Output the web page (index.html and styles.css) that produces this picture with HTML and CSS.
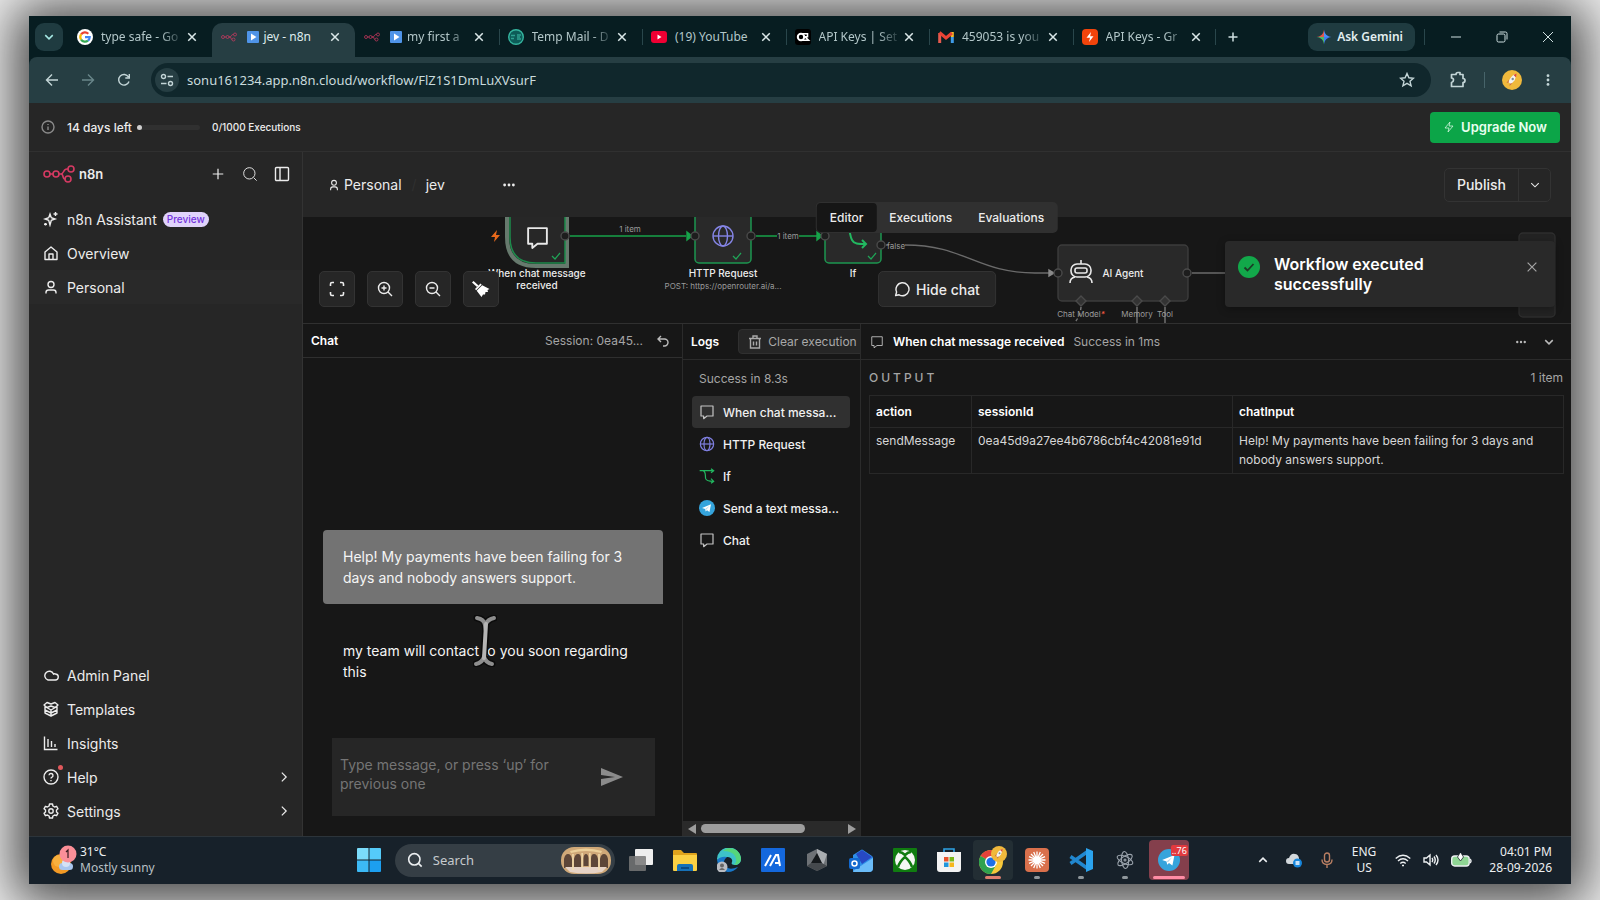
FILE: index.html
```html
<!DOCTYPE html>
<html lang="en">
<head>
<meta charset="utf-8">
<title>jev - n8n</title>
<link rel="stylesheet" href="styles.css">
</head>
<body>
<svg class="defs" aria-hidden="true">
  <defs>
    <symbol id="x" viewBox="0 0 16 16"><path d="M3 3l10 10M13 3L3 13"/></symbol>
    <symbol id="down" viewBox="0 0 16 16"><path d="M3 5.500l5 5 5-5"/></symbol>
    <symbol id="right" viewBox="0 0 16 16"><path d="M5.500 3l5 5-5 5"/></symbol>
    <symbol id="plus" viewBox="0 0 16 16"><path d="M8 2v12M2 8h12"/></symbol>
    <symbol id="dots" viewBox="0 0 16 16"><g fill="currentColor" stroke="none"><circle cx="3" cy="8" r="1.600"/><circle cx="8" cy="8" r="1.600"/><circle cx="13" cy="8" r="1.600"/></g></symbol>
    <symbol id="message" viewBox="0 0 24 24"><path d="M3 3h18v15h-9l-5 4v-4H3z" stroke-linejoin="round"/></symbol>
    <symbol id="globe" viewBox="0 0 24 24"><circle cx="12" cy="12" r="10"/><ellipse cx="12" cy="12" rx="4.500" ry="10"/><path d="M2 12h20"/></symbol>
    <symbol id="branch" viewBox="0 0 24 24"><path d="M1 4h20M6 4c5 2 3 8 4 12 1 3 3 4 11 4M18 1l4 3-4 3M18 16l4 4-4 3"/></symbol>
    <symbol id="search" viewBox="0 0 24 24"><circle cx="11" cy="11" r="8.500"/><path d="M17.500 17.500L22 22"/></symbol>
    <symbol id="bolt" viewBox="0 0 24 24"><path d="M14 2L4 14h8l-2 8 10-12h-8z" stroke-linejoin="round"/></symbol>
    <symbol id="n8n" viewBox="0 0 32 18"><circle cx="4" cy="9" r="3"/><circle cx="13" cy="9" r="3"/><circle cx="28" cy="4" r="3"/><circle cx="25" cy="14" r="3"/><path d="M7 9h3M16 9h2c3 0 2-5 6-5h1M16 9h2c3 0 1 5 4 5"/></symbol>
    <symbol id="play" viewBox="0 0 12 12"><rect width="12" height="12" rx="1" fill="#4f94e8" stroke="none"/><path d="M4 2.500v7l5.500-3.500z" fill="#fff" stroke="none"/></symbol>
    <symbol id="avatar" viewBox="0 0 20 20"><circle cx="10" cy="10" r="10" fill="#f0b93c" stroke="none"/><path d="M14 4c-4 1-6 4-7.500 8l2 2C12 12 14 9 14 4z" fill="#f4f4f4" stroke="none"/><path d="M11.500 5L14.500 3.500 14 7.500z" fill="#dd4a3a" stroke="none"/><path d="M7 9.500l-2.500 3.500 2-.5zM10.500 13l-3 3 .3-2.200z" fill="#c8694a" stroke="none"/><circle cx="10.700" cy="9" r="1.200" fill="#7d8b99" stroke="none"/></symbol>
    <symbol id="plane" viewBox="0 0 24 24"><circle cx="12" cy="12" r="12" fill="#35a4dc" stroke="none"/><path d="M4.500 12l13.500-5.500-2.300 11.500-3.700-2.700-2 2-.7-3.800z" fill="#fff" stroke="none"/><path d="M9.300 13.500L15.500 9l-4.500 5.500" fill="#b9d9ea" stroke="none"/></symbol>
  </defs>
</svg>

<div class="window">
  <header class="tabstrip">
    <button class="tab-search" aria-label="Search tabs"><svg class="i12 bold"><use href="#down"/></svg></button>
    <nav class="tabs">
      <div class="tab">
        <svg class="i16" viewBox="0 0 16 16"><circle cx="8" cy="8" r="8" fill="#fff" stroke="none"/><g stroke-width="2.200"><path d="M4.100 5.400A4.700 4.700 0 0 1 11.300 4.700" stroke="#ea4335"/><path d="M4.100 10.600a4.700 4.700 0 0 1 0-5.200" stroke="#fbbc05"/><path d="M11 11.600a4.700 4.700 0 0 1-6.900-1" stroke="#34a853"/><path d="M8 8.200h4.700a4.700 4.700 0 0 1-1.700 3.400" stroke="#4285f4"/></g></svg>
        <span class="tab-title fade">type safe - Go</span><button class="tab-close" aria-label="Close"><svg class="i12"><use href="#x"/></svg></button>
      </div>
      <div class="tab active">
        <svg class="i16 brand"><use href="#n8n"/></svg>
        <span class="tab-title"><svg class="emoji"><use href="#play"/></svg>jev - n8n</span><button class="tab-close" aria-label="Close"><svg class="i12"><use href="#x"/></svg></button>
      </div>
      <div class="tab">
        <svg class="i16 brand"><use href="#n8n"/></svg>
        <span class="tab-title fade"><svg class="emoji"><use href="#play"/></svg>my first a</span><button class="tab-close" aria-label="Close"><svg class="i12"><use href="#x"/></svg></button>
      </div>
      <div class="tab sep">
        <svg class="i16" viewBox="0 0 16 16"><circle cx="8" cy="8" r="7.300" fill="#0d5c58" stroke="#35b59f"/><path d="M3 6.500h4M3 9.500h3M9 6h4M9 8h3M9 10h4" stroke="#2fa090"/></svg>
        <span class="tab-title fade">Temp Mail - D</span><button class="tab-close" aria-label="Close"><svg class="i12"><use href="#x"/></svg></button>
      </div>
      <div class="tab sep">
        <svg class="i16" viewBox="0 0 16 16"><rect y="2" width="16" height="12" rx="3" fill="#f00033" stroke="none"/><path d="M6.500 5.500v5l4-2.500z" fill="#fff" stroke="none"/></svg>
        <span class="tab-title">(19) YouTube</span><button class="tab-close" aria-label="Close"><svg class="i12"><use href="#x"/></svg></button>
      </div>
      <div class="tab sep">
        <svg class="i16" viewBox="0 0 16 16"><rect width="16" height="16" rx="3" fill="#000" stroke="none"/><circle cx="6" cy="8" r="3.200" stroke="#fff" stroke-width="2"/><path d="M7 4.800h5.500v3H10l3.500 3.500H7" stroke="#fff" stroke-width="1.600"/></svg>
        <span class="tab-title fade">API Keys | Set</span><button class="tab-close" aria-label="Close"><svg class="i12"><use href="#x"/></svg></button>
      </div>
      <div class="tab sep">
        <svg class="i16" viewBox="0 0 16 16"><g stroke-width="3"><path d="M1.700 14V4" stroke="#e55a4e"/><path d="M14.300 14V8" stroke="#3f9be8"/><path d="M14.300 8V3" stroke="#f5bd27"/><path d="M1.500 3.500L8 9l6-5" stroke="#ea4335"/></g></svg>
        <span class="tab-title fade">459053 is you</span><button class="tab-close" aria-label="Close"><svg class="i12"><use href="#x"/></svg></button>
      </div>
      <div class="tab sep">
        <svg class="i16" viewBox="0 0 16 16"><rect width="16" height="16" rx="4" fill="#f2440b" stroke="none"/><path d="M9 3L4.500 8.700H8L7 13l4.500-5.700H8.200z" fill="#fff" stroke="none"/></svg>
        <span class="tab-title fade">API Keys - Gr</span><button class="tab-close" aria-label="Close"><svg class="i12"><use href="#x"/></svg></button>
      </div>
    </nav>
    <button class="new-tab" aria-label="New tab"><svg class="i12 bold"><use href="#plus"/></svg></button>
    <div class="win-controls">
      <button class="gemini"><svg class="i16" viewBox="0 0 16 16"><g stroke="none"><path d="M8 .5C8.500 5 11 7.500 15.500 8H8z" fill="#4b8df8"/><path d="M8 .5C7.500 5 5 7.500.5 8H8z" fill="#e3574b"/><path d="M.5 8C5 8.500 7.500 11 8 15.500V8z" fill="#4cb868"/><path d="M15.500 8C11 8.500 8.500 11 8 15.500V8z" fill="#3f7df0"/></g></svg>Ask Gemini</button>
      <span class="win-sep"></span>
      <button class="win-btn" aria-label="Minimize"><svg class="i12" viewBox="0 0 12 12"><path d="M1 6h10"/></svg></button>
      <button class="win-btn" aria-label="Restore"><svg class="i12" viewBox="0 0 12 12"><rect x="1" y="3" width="8" height="8" rx="1.500"/><path d="M3.500 1H9.500Q11 1 11 2.500V8.500"/></svg></button>
      <button class="win-btn" aria-label="Close window"><svg class="i12" viewBox="0 0 12 12"><path d="M1 1l10 10M11 1L1 11"/></svg></button>
    </div>
  </header>

  <div class="toolbar">
    <button class="nav-btn" aria-label="Back"><svg class="i14" viewBox="0 0 14 14"><path d="M13 7H2M7 1.500L1.500 7 7 12.500"/></svg></button>
    <button class="nav-btn dim" aria-label="Forward"><svg class="i14" viewBox="0 0 14 14"><path d="M1 7h11M7 1.500L12.500 7 7 12.500"/></svg></button>
    <button class="nav-btn" aria-label="Reload"><svg class="i14" viewBox="0 0 14 14"><path d="M12 8.500A5.300 5.300 0 1 1 11.500 4M12.300 1v4h-4"/></svg></button>
    <div class="omnibox">
      <button class="tune" aria-label="Site information"><svg class="i14" viewBox="0 0 14 14"><circle cx="3.500" cy="3.500" r="2"/><path d="M7.500 3.500H13M1 10.500h5.500"/><circle cx="10.500" cy="10.500" r="2"/></svg></button>
      <input class="url" aria-label="Address" value="sonu161234.app.n8n.cloud/workflow/FlZ1S1DmLuXVsurF">
      <button class="star" aria-label="Bookmark"><svg class="i16" viewBox="0 0 16 16"><path d="M8 1.500l1.900 4.300 4.600.4-3.500 3.100 1.100 4.600L8 11.400l-4.100 2.500L5 9.300 1.500 6.200l4.600-.4z"/></svg></button>
    </div>
    <button class="tool-btn" aria-label="Extensions"><svg class="i18" viewBox="0 0 18 18"><path d="M2.500 3.500H7q0-2 2-2t2 0 0 2h3v4q2 0 2 2t-2 2v4H2.500v-4q2-.5 2-2.500t-2-2z" stroke-width="1.700" stroke-linejoin="round"/></svg></button>
    <span class="tool-sep"></span>
    <button class="tool-btn" aria-label="Profile"><svg class="i20"><use href="#avatar"/></svg></button>
    <button class="tool-btn" aria-label="Menu"><svg class="i14 rot"><use href="#dots"/></svg></button>
  </div>

  <div class="banner">
    <svg class="i14 muted" viewBox="0 0 14 14"><circle cx="7" cy="7" r="6"/><path d="M7 6.500v3.500M7 4v1"/></svg>
    <span class="days">14 days left</span>
    <span class="meter"><span class="meter-dot"></span></span>
    <span class="execs">0/1000 Executions</span>
    <button class="upgrade"><svg class="i12"><use href="#bolt"/></svg>Upgrade Now</button>
  </div>

  <div class="app">
    <aside class="sidebar">
      <div class="brand-row">
        <svg class="logo brand"><use href="#n8n"/></svg><b class="brand-name">n8n</b>
        <button class="side-btn" aria-label="Add"><svg class="i14"><use href="#plus"/></svg></button>
        <button class="side-btn" aria-label="Search"><svg class="i16"><use href="#search"/></svg></button>
        <button class="side-btn" aria-label="Toggle sidebar"><svg class="i16" viewBox="0 0 16 16"><rect x="1.500" y="1.500" width="13" height="13" rx="1"/><path d="M6 1.500v13"/></svg></button>
      </div>
      <nav class="menu">
        <a class="menu-item" href="#"><svg class="i16" viewBox="0 0 16 16"><path d="M7 3l1.300 3.700L12 8l-3.700 1.300L7 14l-1.300-4.700L2 8l3.700-1.300zM12.500 1v4M10.500 3h4M2.500 12v2.500M1 13.200h3"/></svg>n8n Assistant<span class="pill">Preview</span></a>
        <a class="menu-item" href="#"><svg class="i16" viewBox="0 0 16 16"><path d="M2 7l6-5 6 5v7.500H2zM6 14.500V9h4v5.500" stroke-linejoin="round"/></svg>Overview</a>
        <a class="menu-item current" href="#"><svg class="i16" viewBox="0 0 16 16"><circle cx="8" cy="5.500" r="3"/><path d="M3 14.500v-1q0-2.500 2.500-2.500h5q2.500 0 2.500 2.500v1"/></svg>Personal</a>
      </nav>
      <nav class="menu bottom">
        <a class="menu-item" href="#"><svg class="i16" viewBox="0 0 16 16"><path d="M5 13h7a3 3 0 0 0 .5-6Q11.500 6.500 10.500 7A4.500 4.500 0 1 0 5 13z"/></svg>Admin Panel</a>
        <a class="menu-item" href="#"><svg class="i16" viewBox="0 0 16 16"><path d="M2 5.500L8 9l6-3.500M8 9v6M2 5.500V12l6 3 6-3V5.500M1 4l3-2.500L8 3l4-1.500L15 4l-3 2.500L8 5 4 6.500zM2 9l6 3 6-3" stroke-linejoin="round"/></svg>Templates</a>
        <a class="menu-item" href="#"><svg class="i16" viewBox="0 0 16 16"><path d="M1.500 1.500v13h13M5 4v8M8.500 6v6M12 9v3"/></svg>Insights</a>
        <a class="menu-item" href="#"><span class="icon-wrap"><svg class="i16" viewBox="0 0 16 16"><circle cx="8" cy="8" r="7"/><path d="M6 6.300a2 2 0 1 1 2.700 2Q8 8.600 8 9.500M8 11v1.200"/></svg><span class="alert-dot"></span></span>Help<svg class="i14 chev"><use href="#right"/></svg></a>
        <a class="menu-item" href="#"><svg class="i16" viewBox="0 0 16 16"><path d="M6.500 1h3l.4 2 1.700 1 2-.7 1.400 2.500L13.500 7v2l1.500 1.200-1.400 2.500-2-.7-1.700 1-.4 2h-3l-.4-2-1.700-1-2 .7L1 10.200 2.500 9V7L1 5.800l1.400-2.500 2 .7 1.700-1z" stroke-linejoin="round"/><circle cx="8" cy="8" r="2.200"/></svg>Settings<svg class="i14 chev"><use href="#right"/></svg></a>
      </nav>
    </aside>

    <main class="work">
      <div class="head">
        <svg class="i12" viewBox="0 0 16 16"><circle cx="8" cy="5" r="3.200"/><path d="M3.500 15v-1.500q0-3 3-3h3q3 0 3 3V15"/></svg>
        <a class="crumb" href="#">Personal</a><span class="slash">/</span><span class="flow-name">jev</span>
        <button class="more" aria-label="More"><svg class="i14"><use href="#dots"/></svg></button>
        <div class="publish"><button class="publish-main">Publish</button><button class="publish-more" aria-label="Publish options"><svg class="i12"><use href="#down"/></svg></button></div>
        <div class="views"><button class="view on">Editor</button><button class="view">Executions</button><button class="view">Evaluations</button></div>
      </div>

      <section class="canvas">
        <svg class="graph" viewBox="0 0 1268 107" width="1268" height="107">
          <path d="M204-10V20q0 29 29 29h31V-10z" fill="#272727" stroke="#66796d" stroke-width="4"/>
          <path d="M207-10V20q0 26 26 26h29V-10z" fill="#272727" stroke="#1d8a4b" stroke-width="1.500"/>
          <path d="M194 13l-6 7h4l-1 5 6-7h-4z" fill="#e8691b" stroke="none"/>
          <rect x="392" y="-12" width="56" height="58" rx="4" fill="#292929" stroke="#1d9650" stroke-width="1.500"/>
          <rect x="522" y="-12" width="56" height="58" rx="4" fill="#292929" stroke="#1d9650" stroke-width="1.500"/>
          <rect x="755" y="28" width="130" height="56" rx="4" fill="#292929" stroke="#3c3c3c"/>
          <rect x="1216" y="16" width="36" height="84" rx="4" fill="#232323" stroke="#2e2e2e"/>
          <path d="M267 19h116M453 19h21M496 19h18" stroke="#17a34a" stroke-width="1.500"/>
          <path d="M384 15l5 4-5 4zM514 15l5 4-5 4z" fill="#17a34a" stroke="#17a34a"/>
          <path d="M583 28h3M602 28c60 0 72 28 130 28h16M889 56h33" stroke="#6b6b6b"/>
          <path d="M746 53l5 3-5 3z" fill="#8a8a8a" stroke="#8a8a8a"/>
          <path d="M834 90v17M862 90v17" stroke="#777"/><path d="M778 90q-1 11-8 17" stroke="#777" stroke-dasharray="3 3"/>
          <g fill="#1d1d1d" stroke="#4a4a4a"><circle cx="262" cy="19" r="4"/><circle cx="392" cy="19" r="4"/><circle cx="448" cy="19" r="4"/><circle cx="522" cy="19" r="4"/><circle cx="578" cy="28" r="4"/><circle cx="755" cy="56" r="4"/><circle cx="884" cy="56" r="4"/></g>
          <g fill="#333" stroke="#4a4a4a"><path d="M778 79l5 5-5 5-5-5zM834 79l5 5-5 5-5-5zM862 79l5 5-5 5-5-5z"/></g>
          <path d="M249 39l3 3 5-6M430 39l3 3 5-6M565 39l3 3 5-6" stroke="#1fa557" stroke-width="1.200"/>
          <use href="#message" x="222" y="8" width="25" height="25" stroke="#e8e8e8" stroke-width="1.800"/>
          <use href="#globe" x="408" y="7" width="24" height="24" stroke="#8585e6"/>
          <path d="M540 8c8 0 6 10 9 15 2 4 6 4 14 4M559 23l4 4-4 4" stroke="#22b860" stroke-width="2"/>
          <g stroke="#e8e8e8" stroke-width="1.600"><rect x="768" y="47" width="20" height="13" rx="6"/><rect x="772" y="51" width="12" height="5" rx="2"/><path d="M778 47v-4M767 66q0-5 5-6M789 66q0-5-5-6"/></g>
        </svg>
        <span class="edge-label e1">1 item</span>
        <span class="edge-label e2">1 item</span>
        <span class="edge-label e3">false</span>
        <span class="node-label n1">When chat message received</span>
        <span class="node-label n2">HTTP Request<small>POST: https://openrouter.ai/a...</small></span>
        <span class="node-label n3">If</span>
        <span class="node-label n4">AI Agent</span>
        <span class="edge-label p1">Chat Model<i>*</i></span>
        <span class="edge-label p2">Memory</span>
        <span class="edge-label p3">Tool</span>
        <div class="controls">
          <button class="ctl" aria-label="Fit view"><svg class="i16" viewBox="0 0 16 16"><path d="M1.500 5V3q0-1.500 1.500-1.500h2M11 1.500h2q1.500 0 1.500 1.500v2M14.500 11v2q0 1.500-1.500 1.500h-2M5 14.500H3q-1.500 0-1.500-1.500v-2" stroke-width="1.600"/></svg></button>
          <button class="ctl" aria-label="Zoom in"><svg class="i16" viewBox="0 0 16 16"><circle cx="7" cy="7" r="5.500"/><path d="M11 11l4 4M7 4.500v5M4.500 7h5"/></svg></button>
          <button class="ctl" aria-label="Zoom out"><svg class="i16" viewBox="0 0 16 16"><circle cx="7" cy="7" r="5.500"/><path d="M11 11l4 4M4.500 7h5"/></svg></button>
          <button class="ctl" aria-label="Tidy up"><svg class="i18" viewBox="0 0 18 18"><g fill="#fff" stroke="none"><path d="M1.500 1L0 2.500l5 4.500L6.500 5.500z"/><path d="M8.500 3.500L3 9l1.200 1.200 5.500-5.500z"/><path d="M10.200 5.200L17.500 9l-2 1 .5 2-2.500 0-.5 2.500-2 0-1.500 2.500L4.700 10.700z"/></g></svg></button>
        </div>
        <button class="hide-chat"><svg class="i16" viewBox="0 0 16 16"><path d="M1.500 14.500l1-3.500A6.500 6.500 0 1 1 5 13.800z" stroke-linejoin="round"/></svg>Hide chat</button>
        <div class="toast" role="alert">
          <svg class="i22" viewBox="0 0 22 22"><circle cx="11" cy="11" r="11" fill="#12a84a" stroke="none"/><path d="M6.500 11.500l3 3 6-6.500" stroke="#1c3b26" stroke-width="1.800"/></svg>
          <strong class="toast-title">Workflow executed successfully</strong>
          <button class="toast-close" aria-label="Dismiss"><svg class="i14"><use href="#x"/></svg></button>
        </div>
      </section>

      <section class="panels">
        <div class="chat">
          <div class="chat-head"><h2 class="ttl">Chat</h2><span class="session">Session: 0ea45...</span><button class="plain" aria-label="Reset session"><svg class="i12" viewBox="0 0 12 12"><path d="M4 1L1 4l3 3M1 4h6.500a3.500 3.500 0 0 1 0 7H6"/></svg></button></div>
          <div class="chat-body">
            <p class="msg user">Help! My payments have been failing for 3 days and nobody answers support.</p>
            <p class="msg bot">my team will contact to you soon regarding this
              <svg class="ibeam" viewBox="0 0 24 52" width="24" height="52"><g stroke-linecap="round"><path d="M4 3q7 1 8 7 3-6 9-7M13 10L11 42M3 49q6-1 8-7 2 6 8 7" stroke="#0b0b0b" stroke-width="7"/><path d="M4 3q7 1 8 7 3-6 9-7M3 49q6-1 8-7 2 6 8 7" stroke="#8e8e8e" stroke-width="4"/><path d="M13 9L11 43" stroke="#b4b4b4" stroke-width="4"/></g></svg>
            </p>
            <div class="compose">
              <textarea class="compose-text" aria-label="Message" placeholder="Type message, or press ‘up’ for previous one"></textarea>
              <button class="send" aria-label="Send"><svg viewBox="0 0 22 18" width="22" height="18"><path d="M0 0l22 9L0 18v-7l14-2L0 7z" fill="#8b8b8b" stroke="none"/></svg></button>
            </div>
          </div>
        </div>

        <div class="logs">
          <div class="panel-head"><h2 class="ttl">Logs</h2><button class="clear"><svg class="i14" viewBox="0 0 14 14"><path d="M1 3.500h12M5 3.500V1h4v2.500M2.500 3.500v9.500h9V3.500M5.500 6.500v4M8.500 6.500v4"/></svg>Clear execution</button></div>
          <p class="status">Success in 8.3s</p>
          <ul class="log-list">
            <li class="log sel"><svg class="i16"><use href="#message"/></svg>When chat messa...</li>
            <li class="log"><svg class="i16 violet"><use href="#globe"/></svg>HTTP Request</li>
            <li class="log"><svg class="i16 green"><use href="#branch"/></svg>If</li>
            <li class="log"><svg class="i16"><use href="#plane"/></svg>Send a text messa...</li>
            <li class="log"><svg class="i16"><use href="#message"/></svg>Chat</li>
          </ul>
          <div class="hscroll"><span class="arrow left"></span><span class="thumb"></span><span class="arrow right"></span></div>
        </div>

        <div class="output">
          <div class="panel-head out-head"><svg class="i14 light"><use href="#message"/></svg><h2 class="ttl">When chat message received</h2><span class="took">Success in 1ms</span><button class="plain push" aria-label="More"><svg class="i12"><use href="#dots"/></svg></button><button class="plain" aria-label="Collapse"><svg class="i12 bold"><use href="#down"/></svg></button></div>
          <div class="out-bar"><span class="caps">OUTPUT</span><span class="count">1 item</span></div>
          <table class="data">
            <colgroup><col class="c1"><col class="c2"><col></colgroup>
            <thead><tr><th>action</th><th>sessionId</th><th>chatInput</th></tr></thead>
            <tbody><tr><td>sendMessage</td><td>0ea45d9a27ee4b6786cbf4c42081e91d</td><td>Help! My payments have been failing for 3 days and nobody answers support.</td></tr></tbody>
          </table>
        </div>
      </section>
    </main>
  </div>

  <footer class="taskbar">
    <div class="weather">
      <svg viewBox="0 0 28 30" width="28" height="30"><g stroke="none"><circle cx="12" cy="19" r="10" fill="#f39a25"/><circle cx="10" cy="16" r="6" fill="#f8b03e"/><rect x="10" y="18" width="14" height="7" rx="3.500" fill="#a9c6ee"/><circle cx="17" cy="18" r="4" fill="#d5e2f5"/><circle cx="19" cy="9" r="8.500" fill="#fb8f98"/></g><path d="M17 7l2-2v8" stroke="#3a1c20" stroke-width="1.200"/></svg>
      <div><div>31°C</div><div class="soft">Mostly sunny</div></div>
    </div>
    <div class="dock">
      <button class="app-btn start" aria-label="Start"><svg class="i24" viewBox="0 0 24 24"><g fill="#3cb9f5" stroke="none"><path d="M0 1q0-1 1-1h10.500v11.500H0z" fill="#7bdcfb"/><path d="M12.500 0H23q1 0 1 1v10.500H12.500z" fill="#55cbf9"/><path d="M0 12.500h11.500V24H1q-1 0-1-1z"/><path d="M12.500 12.500H24V23q0 1-1 1H12.500z" fill="#1c9ff0"/></g></svg></button>
      <label class="find"><svg class="i16 thick"><use href="#search"/></svg><input class="find-input" placeholder="Search" aria-label="Search">
        <svg viewBox="0 0 50 27" width="50" height="27"><g stroke="none"><rect width="50" height="27" rx="13" fill="#cfa878"/><path d="M3 21v-9q1-5 4-5t4 5v9zM13 21v-9q1-5 4-5t3 5v9zM22.500 19v-8q.5-4 2.500-4t2.500 4v8zM30 21v-9q0-5 3-5t4 5v9zM39 21v-9q1-5 4-5t4 5v9z" fill="#5d4638"/><path d="M4 20h42l-5 5q-16 3-32 0z" fill="#e6d3c6"/><path d="M11.300 7h1.400v16h-1.400zM20.500 6h1.300v15h-1.300zM28.200 6h1.300v15h-1.300zM37.300 7h1.400v16h-1.400z" fill="#f3dfb0"/><path d="M9 4q16-5 32 0l-1 2q-15-4-30 0z" fill="#ecd09a"/></g></svg>
      </label>
      <button class="app-btn" aria-label="Task view"><svg class="i24" viewBox="0 0 24 24"><g stroke="none"><rect x="6" y="1" width="18" height="16" rx="1" fill="#eee"/><rect x="0" y="8" width="17" height="15" rx="1" fill="#777" opacity=".85"/></g></svg></button>
      <button class="app-btn" aria-label="File Explorer"><svg class="i24" viewBox="0 0 24 24"><g stroke="none"><path d="M0 3q0-1 1-1h7l3 3h12q1 0 1 1v6H0z" fill="#e0a31c"/><path d="M0 7h24v15q0 1-1 1H1q-1 0-1-1z" fill="#fbd043"/><path d="M4 23v-5q0-2 2-2h12q2 0 2 2v5z" fill="#1671b8"/><path d="M8 19h8v2H8z" fill="#0c4b85"/></g></svg></button>
      <button class="app-btn" aria-label="Edge"><svg class="i24" viewBox="0 0 24 24"><g stroke="none"><path d="M0 12A12 12 0 0 1 24 11c0 4-3 6-6 6-3 0-4-1-3-3 1-3-2-5-5-5-5 0-8 2-10 3z" fill="#3ec3c9"/><path d="M12 0q10 0 12 10 0 7-7 7 4-4 1-9T6 3q3-3 6-3z" fill="#55d67b"/><path d="M0 12q4-4 10-3-5 4-2 9 4 5 13 1-4 5-10 5Q1 23 0 12z" fill="#1877c9"/><circle cx="5" cy="19" r="5.500" fill="#b9bcc2"/><circle cx="5" cy="17.500" r="2" fill="#666"/><path d="M2 22q3-4 6 0z" fill="#666"/></g></svg></button>
      <button class="app-btn" aria-label="MyASUS"><svg class="i24" viewBox="0 0 24 24"><rect width="24" height="24" rx="1" fill="#1468dd" stroke="none"/><path d="M4 18l6-11M9 18l6-11h2l2 11M14 15h4" stroke="#fff" stroke-width="2"/></svg></button>
      <button class="app-btn" aria-label="Armoury"><svg class="i24" viewBox="0 0 24 24"><g stroke="none"><path d="M12 1l10 5v12l-10 5L2 18V6z" fill="#6e7276"/><path d="M12 1l10 5-4 12-6-13z" fill="#a9adb1"/><path d="M12 5l5 10H6z" fill="#15191c"/><path d="M2 18l4-3h11l5 3-10 5z" fill="#45494d"/></g></svg></button>
      <button class="app-btn" aria-label="Outlook"><svg class="i24" viewBox="0 0 24 24"><g stroke="none"><path d="M4 7l8-5q1-1 2 0l9 6q1 1 1 2v10q0 4-4 4H4z" fill="#2e8fe8"/><path d="M7 6l6-4 10 7-10 7z" fill="#2749c4"/><path d="M4 23l20-13v10q0 4-4 4H5z" fill="#6bbcf8"/><rect x="0" y="10" width="11" height="11" rx="2" fill="#1269cf"/></g><circle cx="5.500" cy="15.500" r="2.500" stroke="#fff" stroke-width="1.500"/></svg></button>
      <button class="app-btn" aria-label="Xbox"><svg class="i24" viewBox="0 0 24 24"><rect width="24" height="24" rx="1" fill="#107c10" stroke="none"/><circle cx="12" cy="12" r="10" fill="#f4f7f4" stroke="none"/><path d="M5 19q2-6 7-10 5 4 7 10M6 4q3 0 6 3 3-3 6-3" stroke="#107c10" stroke-width="2.500"/></svg></button>
      <button class="app-btn" aria-label="Store"><svg class="i24" viewBox="0 0 24 24"><path d="M7 6V1h10v5" stroke="#2ea2e5" stroke-width="1.600"/><g stroke="none"><path d="M0 4h24v17q0 3-3 3H3q-3 0-3-3z" fill="#f3f3f3"/><path d="M7 9h4.500v4.500H7z" fill="#e8532b"/><path d="M12.500 9H17v4.500h-4.500z" fill="#7ab81c"/><path d="M7 14.500h4.500V19H7z" fill="#2096dc"/><path d="M12.500 14.500H17V19h-4.500z" fill="#f6b71d"/></g></svg></button>
      <button class="app-btn open" aria-label="Chrome"><svg class="i28" viewBox="0 0 28 28"><g stroke="none"><circle cx="12" cy="16" r="12" fill="#f7c93a"/><path d="M12 16L1.600 10A12 12 0 0 1 22.400 10z" fill="#e5423a"/><path d="M12 16L1.600 10A12 12 0 0 0 12 28l5-9z" fill="#2fa24f"/><circle cx="12" cy="16" r="6" fill="#fff"/><circle cx="12" cy="16" r="4.600" fill="#1d6fe8"/></g><use href="#avatar" x="12" y="0" width="16" height="16"/></svg><span class="mark wide"></span></button>
      <button class="app-btn" aria-label="Claude"><svg class="i24" viewBox="0 0 24 24"><rect width="24" height="24" rx="4" fill="#d9704c" stroke="none"/><path d="M12 3.500v17M3.500 12h17M6 6l12 12M18 6L6 18M8.700 4l6.600 16M15.300 4L8.700 20M4 8.700l16 6.600M4 15.300l16-6.600" stroke="#fff" stroke-width="1.300"/></svg><span class="mark"></span></button>
      <button class="app-btn" aria-label="VS Code"><svg class="i24" viewBox="0 0 24 24"><path d="M1.500 8.500L18 20M1.500 15.500L18 4" stroke="#2187cf" stroke-width="3.500"/><path d="M17 0l7 3v18l-7 3z" fill="#2ba3ee" stroke="none"/></svg><span class="mark"></span></button>
      <button class="app-btn" aria-label="Electron"><svg class="i20" viewBox="0 0 20 20"><g stroke="#9aa3ac" stroke-width="1.100"><ellipse cx="10" cy="10" rx="8.500" ry="3.500" transform="rotate(25 10 10)"/><ellipse cx="10" cy="10" rx="8.500" ry="3.500" transform="rotate(85 10 10)"/><ellipse cx="10" cy="10" rx="8.500" ry="3.500" transform="rotate(145 10 10)"/><circle cx="10" cy="10" r="1"/></g></svg><span class="mark"></span></button>
      <button class="app-btn tg" aria-label="Telegram"><svg class="i22"><use href="#plane"/></svg><span class="badge">..76</span><span class="mark pink"></span></button>
    </div>
    <div class="tray">
      <svg class="i12 flip bold"><use href="#down"/></svg>
      <svg class="i16" viewBox="0 0 16 16"><g stroke="none"><path d="M3 12a3 3 0 0 1 0-6Q5 1 9 2q3 0 4 4v6z" fill="#d3d8dc"/><circle cx="11.500" cy="11" r="4.500" fill="#1686dc"/></g><path d="M9.500 10h4M9.500 12h4" stroke="#fff"/></svg>
      <svg class="i16 copper" viewBox="0 0 16 16"><rect x="5.500" y="1" width="5" height="9" rx="2.500"/><path d="M3 7.500q0 5 5 5t5-5M8 12.500V16"/></svg>
      <div class="lang"><div>ENG</div><div>US</div></div>
      <div class="sys">
        <svg class="i16" viewBox="0 0 16 16"><path d="M.7 6.500q7.300-6.500 14.600 0M3 9q5-4.500 10 0M5.300 11.500q2.700-2.500 5.400 0M7 13.500h2"/></svg>
        <svg class="i16" viewBox="0 0 16 16"><path d="M1 6h2.500L7 3v10L3.500 10H1zM9 6q1.500 2 0 4M11 4.500q2.500 3.500 0 7M13 3q4 5 0 10"/></svg>
        <svg viewBox="0 0 21 14" width="21" height="14"><rect x=".7" y="3" width="17.500" height="10" rx="3" fill="#8fd694"/><path d="M19 6q2 2 0 4"/><path d="M9.500-1L6.500 4l3 4 3-4z" fill="#fff" stroke="#1a232a" stroke-width=".8"/></svg>
      </div>
      <div class="clock"><div>04:01 PM</div><div>28-09-2026</div></div>
    </div>
  </footer>
</div>
</body>
</html>
```

FILE: styles.css
```css
* { box-sizing: border-box; }
body {
  margin: 0;
  min-height: 100vh;
  display: flex;
  padding: 16px 29px;
  background: #f0f0f0;
  font-family: Inter, "Liberation Sans", sans-serif;
  font-size: 14px;
  color: #ececec;
}
svg { fill: none; stroke: currentColor; stroke-width: 1.4; flex: none; display: block; }
button { font: inherit; color: inherit; background: none; border: 0; padding: 0; display: flex; align-items: center; justify-content: center; }
input, textarea { font: inherit; color: inherit; background: none; border: 0; padding: 0; outline: 0; min-width: 0; }
a { color: inherit; text-decoration: none; }
h2, p, ul { margin: 0; padding: 0; list-style: none; }
.defs { position: absolute; width: 0; height: 0; }
.i12 { width: 12px; height: 12px; }
.i14 { width: 14px; height: 14px; }
.i16 { width: 16px; height: 16px; }
.i18 { width: 18px; height: 18px; }
.i20 { width: 20px; height: 20px; }
.i22 { width: 22px; height: 22px; }
.i24 { width: 24px; height: 24px; }
.i28 { width: 28px; height: 28px; }
.bold { stroke-width: 2; }
.thick { stroke-width: 2.4; }
.rot { transform: rotate(90deg); }
.flip { transform: rotate(180deg); }
.muted { color: #8a8a8a; }
.light { color: #cfcfcf; }
.brand { color: #d63a63; }
.violet { color: #7f7fe0; }
.green { color: #22b860; }

.window {
  flex: 1;
  min-width: 0;
  display: flex;
  flex-direction: column;
  background: #171717;
  box-shadow: 0 4px 50px 14px rgba(0, 0, 0, .72);
}

/* Browser chrome */
.tabstrip, .toolbar, .taskbar { font-family: "Noto Sans", "Open Sans", sans-serif; }
.tabstrip { position: relative; z-index: 1; display: flex; align-items: center; height: 41px; padding-left: 6px; background: #071d21; font-size: 12px; color: #b3c7c9; }
.tab-search { width: 28px; height: 28px; border-radius: 9px; background: #1f3b40; color: #a6e9e4; margin-right: 5px; }
.tabs { flex: 0 1 1148px; display: grid; grid-template-columns: repeat(8, minmax(0, 1fr)); align-self: stretch; min-width: 0; }
.tab { display: flex; align-items: center; padding: 0 14px 0 9px; min-width: 0; position: relative; }
.tab.sep::before, .tab:last-child::after { content: ""; position: absolute; left: 0; top: 13px; width: 1px; height: 16px; background: #29464b; }
.tab:last-child::after { left: auto; right: 0; }
.tab.active { background: #263e43; border-radius: 10px 10px 0 0; margin-top: 7px; padding-bottom: 7px; color: #dfeced; }
.tab-title { flex: 1; min-width: 0; margin-left: 8px; white-space: nowrap; display: flex; align-items: center; gap: 5px; }
.fade { mask-image: linear-gradient(90deg, #000 70%, transparent 98%); }
.emoji { width: 12px; height: 12px; margin-left: 2px; }
.tab-close { width: 12px; height: 16px; color: #dbe8e9; }
.tab-close svg { stroke-width: 2; }
.new-tab { width: 34px; height: 28px; color: #cfe0e1; }
.win-controls { margin-left: auto; display: flex; align-items: center; color: #cfe0e1; }
.gemini { gap: 5px; height: 28px; padding: 0 12px 0 8px; border-radius: 9px; background: #1f3b40; font-weight: 600; color: #e3eff0; font-size: 12px; white-space: nowrap; }
.win-sep { width: 1px; height: 16px; margin: 0 8px 0 9px; background: #29464b; }
.win-btn { width: 46px; height: 28px; }
.win-btn svg { stroke-width: 1; }
.toolbar { display: flex; align-items: center; height: 46px; padding: 0 10px 0 5px; background: #263e43; border-radius: 8px 8px 0 0; color: #c3d5d7; box-shadow: 0 -8px 0 0 #071d21; }
.nav-btn { width: 36px; height: 34px; }
.dim { color: #69868a; }
.omnibox { flex: 1; display: flex; align-items: center; height: 34px; border-radius: 17px; background: #10272c; padding: 0 16px 0 4px; margin: 0 14px 0 9px; }
.tune { width: 24px; height: 24px; border-radius: 12px; background: #263e43; margin-right: 8px; }
.url { flex: 1; font-size: 13px; color: #c9dbdd; }
.tool-btn { width: 26px; height: 30px; }
.tool-sep { width: 1px; height: 16px; background: #47646a; margin: 0 14px 0 13px; }
.tool-btn:last-child { margin-left: 10px; }

/* Trial banner */
.banner { display: flex; align-items: center; height: 49px; padding: 0 11px 0 12px; background: #262626; border-bottom: 1px solid #303030; font-size: 12px; font-weight: 500; }
.days { margin: 0 5px 0 12px; }
.meter { width: 63px; height: 5px; border-radius: 3px; background: #303030; margin-right: 12px; }
.meter-dot { display: block; width: 5px; height: 5px; border-radius: 3px; background: #cfcfcf; }
.execs { font-size: 10px; }
.upgrade { margin-left: auto; gap: 6px; height: 31px; padding: 0 13px; border-radius: 4px; background: #0ca548; color: #e9fff0; font-weight: 600; font-size: 13px; }

/* App */
.app { flex: 1; display: grid; grid-template-columns: 274px minmax(0, 1fr); min-height: 0; }
.sidebar { display: flex; flex-direction: column; background: #262626; border-right: 1px solid #333; padding-bottom: 8px; }
.brand-row { display: flex; align-items: center; height: 44px; padding: 0 4px 0 14px; margin-bottom: 6px; }
.logo { width: 32px; height: 18px; stroke-width: 1.6; margin-right: 4px; }
.brand-name { flex: 1; font-weight: 600; font-size: 13px; }
.side-btn { width: 32px; height: 32px; }
.menu-item { display: flex; align-items: center; gap: 8px; height: 34px; padding: 0 11px 0 14px; }
.menu-item.current { background: #292929; }
.bottom { margin-top: auto; }
.pill { margin-left: -2px; padding: 0 4px; border-radius: 8px; background: #e0d3fb; color: #7434dc; font-size: 10px; line-height: 15px; font-weight: 500; }
.chev { margin-left: auto; }
.icon-wrap { position: relative; }
.alert-dot { position: absolute; right: -4px; top: -4px; width: 5px; height: 5px; border-radius: 3px; background: #e0585b; }

.work { display: flex; flex-direction: column; min-width: 0; background: #171717; }
.head { position: relative; z-index: 2; display: flex; align-items: center; height: 65px; padding: 0 20px 0 25px; background: #262626; }
.crumb { margin: 0 10px 0 4px; }
.slash { color: #303030; margin-right: 9px; }
.more { margin-left: 57px; }
.publish { margin-left: auto; display: flex; height: 34px; border: 1px solid #333; border-radius: 5px; font-weight: 500; }
.publish-main { padding: 0 12px; }
.publish-more { width: 32px; border-left: 1px solid #333; }
.views { position: absolute; left: 50%; bottom: -16px; transform: translateX(-50%); display: flex; padding: 1px; border-radius: 5px; background: #303030; font-size: 12px; font-weight: 500; }
.view { height: 29px; padding: 0 13px; border-radius: 4px; white-space: nowrap; }
.view.on { background: #161616; }

/* Workflow canvas */
.canvas { position: relative; height: 107px; overflow: hidden; border-bottom: 1px solid #303030; }
.graph { position: absolute; left: 0; top: 0; }
.node-label, .edge-label { position: absolute; transform: translateX(-50%); text-align: center; white-space: nowrap; }
.node-label { font-size: 10px; line-height: 12px; font-weight: 500; }
.node-label small { display: block; font-size: 8px; font-weight: 400; line-height: 15px; color: #9a9a9a; }
.edge-label { font-size: 8px; line-height: 10px; color: #9b9b9b; }
.edge-label i { color: #ff5d45; }
.n1 { left: 234px; top: 50px; width: 112px; white-space: normal; }
.n2 { left: 420px; top: 50px; }
.n3 { left: 550px; top: 50px; }
.n4 { left: 820px; top: 50px; }
.e1 { left: 327px; top: 7px; }
.e2 { left: 485px; top: 14px; }
.e3 { left: 593px; top: 24px; }
.p1 { left: 778px; top: 92px; }
.p2 { left: 834px; top: 92px; }
.p3 { left: 862px; top: 92px; }
.controls { position: absolute; left: 16px; bottom: 16px; display: flex; gap: 12px; }
.ctl, .hide-chat { height: 36px; border: 1px solid #333; border-radius: 5px; background: #262626; }
.ctl { width: 36px; }
.hide-chat { position: absolute; left: 50%; bottom: 16px; transform: translateX(-50%); gap: 6px; padding: 0 15px; font-weight: 500; white-space: nowrap; }
.toast { position: absolute; right: 16px; top: 24px; width: 330px; display: flex; align-items: flex-start; padding: 13px 16px; background: #292929; border-radius: 4px; box-shadow: 0 2px 8px rgba(0, 0, 0, .3); }
.toast svg.i22 { margin-top: 2px; margin-left: -3px; }
.toast-title { width: 190px; margin: 0 auto 0 14px; font-size: 16px; line-height: 20px; font-weight: 600; color: #fff; }
.toast-close { height: 26px; color: #a5a5a5; }

/* Bottom panels */
.panels { flex: 1; display: grid; grid-template-columns: 380px 178px minmax(0, 1fr); min-height: 0; font-size: 13px; }
.chat, .logs { border-right: 1px solid #2b2b2b; min-width: 0; display: flex; flex-direction: column; }
.ttl { font-size: 12px; font-weight: 600; color: #fff; white-space: nowrap; }
.plain { width: 16px; height: 20px; color: #bbb; }
.chat-head { display: flex; align-items: center; height: 34px; padding: 0 11px 0 8px; border-bottom: 1px solid #2f2f2f; }
.session { margin: 0 12px 0 auto; font-size: 12px; color: #a5a5a5; }
.chat-body { flex: 1; display: flex; flex-direction: column; justify-content: flex-end; padding: 0 19px 20px 20px; line-height: 21px; font-size: 14px; }
.msg { padding: 16px 20px; color: #f5f5f5; }
.user { background: #737373; border-radius: 4px 4px 0 4px; margin-bottom: 20px; }
.bot { position: relative; margin-bottom: 40px; }
.ibeam { position: absolute; left: 150px; top: -9px; }
.compose { display: flex; align-items: center; margin: 0 8px 0 9px; padding: 0 32px 0 8px; height: 78px; background: #262626; }
.compose-text { flex: 1; height: 44px; resize: none; line-height: 19px; overflow: hidden; margin-right: 20px; }
.compose-text::placeholder { color: #757575; }
.panel-head { display: flex; align-items: center; height: 36px; padding-left: 8px; border-bottom: 1px solid #2b2b2b; overflow: hidden; flex: none; }
.clear { flex: none; gap: 6px; height: 25px; margin-left: 19px; padding: 0 9px; border-radius: 4px; background: #262626; border: 1px solid #303030; font-size: 12px; color: #a9a9a9; white-space: nowrap; }
.status { padding: 8px 16px 7px; line-height: 21px; font-size: 12px; color: #a5a5a5; }
.log-list { padding: 0 10px 0 9px; }
.log { display: flex; align-items: center; gap: 8px; height: 32px; padding-left: 7px; border-radius: 4px; font-size: 12px; font-weight: 500; color: #f0f0f0; white-space: nowrap; }
.log.sel { background: #303030; }
.log svg { stroke-width: 1.8; }
.log svg:not(.green):not(.violet) { color: #c4c4c4; }
.hscroll { margin-top: auto; display: flex; align-items: center; gap: 5px; height: 15px; padding: 0 4px 0 5px; background: #2a2a2a; }
.thumb { width: 104px; height: 9px; border-radius: 5px; background: #9d9d9d; margin-right: auto; }
.arrow { border: 5px solid transparent; }
.arrow.left { border-right: 8px solid #9d9d9d; border-left: 0; }
.arrow.right { border-left: 8px solid #9d9d9d; border-right: 0; }
.output { min-width: 0; }
.out-head { gap: 9px; padding: 0 14px 0 9px; }
.took { font-size: 12px; color: #a5a5a5; white-space: nowrap; }
.push { margin-left: auto; margin-right: 3px; }
.out-bar { display: flex; justify-content: space-between; align-items: center; height: 35px; padding: 0 8px; font-size: 12px; color: #a5a5a5; }
.caps { letter-spacing: 3px; font-weight: 500; }
.data { width: calc(100% - 15px); margin-left: 8px; border-collapse: collapse; table-layout: fixed; font-size: 12px; line-height: 19px; color: #d6d6d6; }
.data th, .data td { border: 1px solid #282828; text-align: left; vertical-align: top; padding: 3px 6px 4px; }
.data th { padding: 6px; font-weight: 600; color: #fff; }
.c1 { width: 102px; }
.c2 { width: 261px; }

/* Taskbar */
.taskbar { display: grid; grid-template-columns: minmax(0, 318fr) auto minmax(0, 378fr); align-items: center; height: 48px; padding-bottom: 1px; background: #17212a; border-top: 1px solid #2c343a; font-size: 12px; line-height: 16px; color: #eceff1; flex: none; }
.weather { display: flex; align-items: center; gap: 3px; padding-left: 20px; white-space: nowrap; }
.soft { color: #b9c0c5; }
.dock { display: flex; align-items: center; }
.app-btn { position: relative; width: 40px; height: 40px; margin: 0 2px; border-radius: 4px; }
.start { width: 36px; }
.app-btn.open { background: #232e34; }
.tg { background: #843f4c; }
.mark { position: absolute; bottom: 1px; left: 50%; width: 6px; height: 3px; margin-left: -3px; border-radius: 2px; background: #8f979c; }
.wide { width: 16px; margin-left: -8px; background: #e07f6f; }
.pink { width: 32px; margin-left: -16px; background: #ff8ca5; }
.badge { position: absolute; right: 1px; top: 5px; padding: 0 1px; background: #e23a3f; color: #fff; border-radius: 2px; font-size: 9px; line-height: 11px; }
.find { display: flex; align-items: center; width: 220px; height: 33px; margin: 0 4px 0 6px; padding: 0 4px 0 12px; border-radius: 17px; background: #353e45; gap: 10px; }
.find-input { flex: 1; font-size: 13px; }
.find-input::placeholder { color: #c5cacd; }
.tray { display: flex; align-items: center; justify-content: flex-end; gap: 17px; padding-right: 19px; white-space: nowrap; }
.sys { display: flex; align-items: center; gap: 12px; margin-left: 2px; }
.copper { color: #b97f63; }
.lang { text-align: center; }
.clock { text-align: right; }
```
